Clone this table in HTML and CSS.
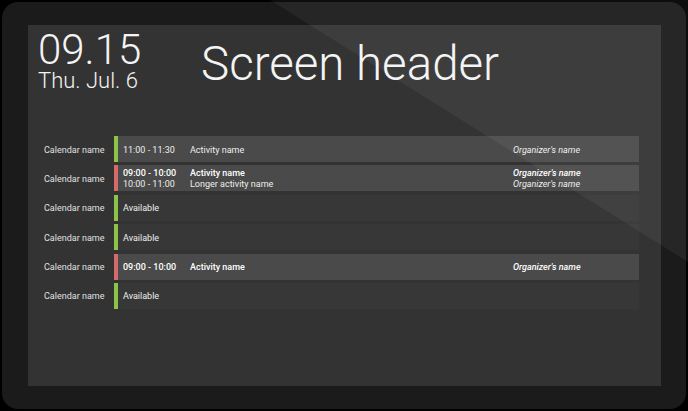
FILE: index.html
```html
<!DOCTYPE html>
<html>
<head>
<meta charset="utf-8">
<link rel="stylesheet" href="styles.css">
</head>
<body>
<div class="device">
  <div class="screen">
    <div class="top">
      <div class="clock">
        <div class="time">09.15</div>
        <div class="date">Thu. Jul. 6</div>
      </div>
      <h1 class="header">Screen header</h1>
    </div>
    <div class="rows">
      <div class="row busy">
        <div class="cal">Calendar name</div>
        <div class="bar green"></div>
        <div class="info">
          <span>11:00 - 11:30</span><span>Activity name</span><span class="org">Organizer's name</span>
        </div>
      </div>
      <div class="row busy">
        <div class="cal">Calendar name</div>
        <div class="bar red"></div>
        <div class="info">
          <span class="b">09:00 - 10:00</span><span class="b">Activity name</span><span class="org b">Organizer's name</span>
          <span>10:00 - 11:00</span><span>Longer activity name</span><span class="org">Organizer's name</span>
        </div>
      </div>
      <div class="row free">
        <div class="cal">Calendar name</div>
        <div class="bar green"></div>
        <div class="info"><span>Available</span></div>
      </div>
      <div class="row free">
        <div class="cal">Calendar name</div>
        <div class="bar green"></div>
        <div class="info"><span>Available</span></div>
      </div>
      <div class="row busy">
        <div class="cal">Calendar name</div>
        <div class="bar red"></div>
        <div class="info">
          <span class="b">09:00 - 10:00</span><span class="b">Activity name</span><span class="org b">Organizer's name</span>
        </div>
      </div>
      <div class="row free">
        <div class="cal">Calendar name</div>
        <div class="bar green"></div>
        <div class="info"><span>Available</span></div>
      </div>
    </div>
  </div>
</div>
<svg class="glare" width="688" height="411" viewBox="0 0 688 411"><polygon points="270,0 688,0 688,262" fill="#ffffff" fill-opacity="0.05"/></svg>
</body>
</html>
```
FILE: styles.css
```css
html, body {
  margin: 0;
  padding: 0;
  background: #000;
  width: 688px;
  height: 411px;
  overflow: hidden;
  font-family: Roboto, "Liberation Sans", sans-serif;
  color: #e6e6e6;
}
.device {
  box-sizing: border-box;
  margin: 2px;
  width: 684px;
  height: 407px;
  background: #1b1b1b;
  border-radius: 16px;
  padding: 23px 25px 23px 26px;
}
.screen {
  box-sizing: border-box;
  height: 100%;
  background: #333333;
  padding: 4px 22px 0 0;
}
.top {
  display: flex;
  align-items: flex-start;
  height: 107px;
}
.clock {
  width: 163px;
  padding-left: 10px;
  box-sizing: border-box;
  font-weight: 300;
  color: #f4f4f4;
}
.time {
  font-size: 42px;
  line-height: 41px;
}
.date {
  font-size: 22px;
  line-height: 22px;
}
.header {
  margin: 11px 0 0 10px;
  font-size: 47.5px;
  line-height: 48px;
  font-weight: 300;
  color: #f4f4f4;
}
.rows {
  display: flex;
  flex-direction: column;
  gap: 3.4px;
}
.row {
  display: grid;
  grid-template-columns: 86px 4px 1fr;
  height: 26px;
  font-size: 9px;
}
.cal {
  display: flex;
  align-items: center;
  padding: 1px 0 0 16px;
  color: #e0e0e0;
  background: #333333;
}
.bar.green { background: #8cc447; }
.bar.red { background: #d66a68; }
.busy .info { background: #4a4a4a; }
.free .info { background: #373737; }
.info {
  display: grid;
  grid-template-columns: 67px 1fr 126px;
  align-content: center;
  padding: 2px 0 0 5px;
  line-height: 11px;
  color: #eeeeee;
}
.b { font-weight: 500; color: #ffffff; }
.org { font-style: italic; }
.glare {
  position: absolute;
  left: 0;
  top: 0;
  pointer-events: none;
}
```
